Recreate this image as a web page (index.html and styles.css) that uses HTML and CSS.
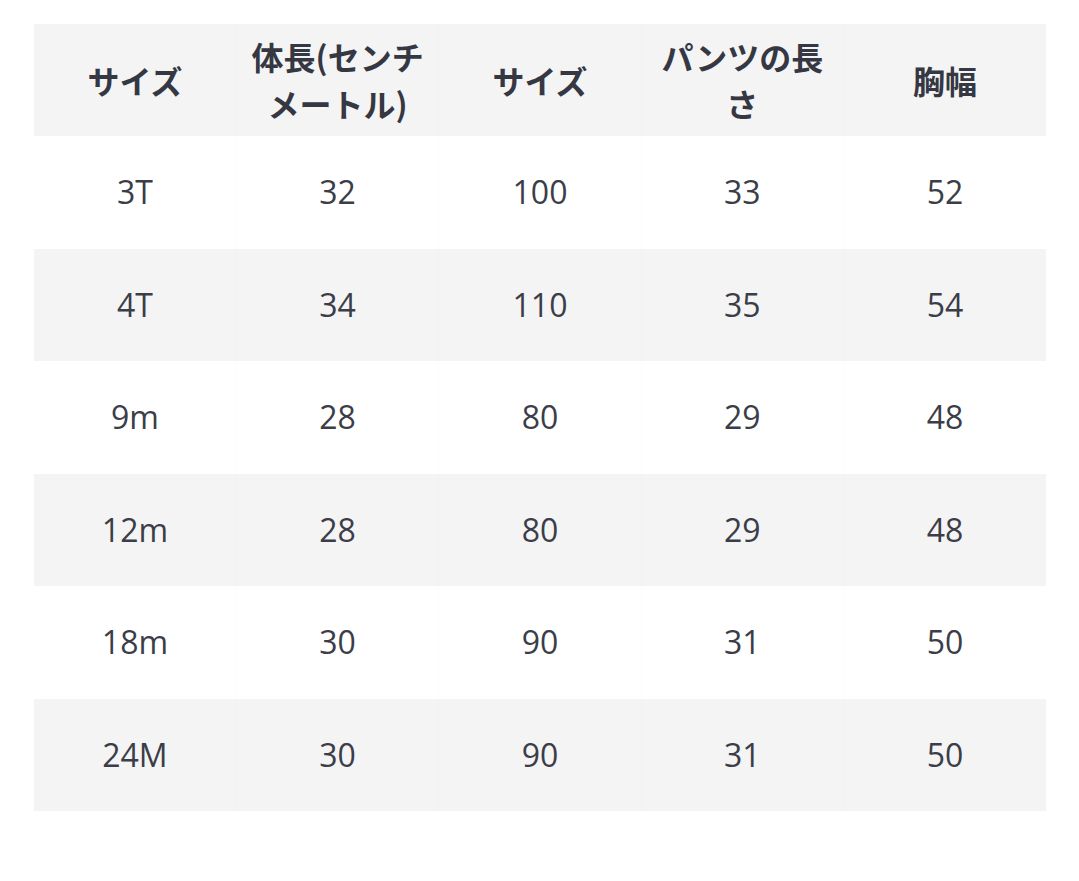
FILE: index.html
```html
<!DOCTYPE html>
<html lang="ja">
<head>
<meta charset="utf-8">
<title>サイズ表</title>
<link rel="stylesheet" href="styles.css">
</head>
<body>
<div class="wrap">
<table class="size-table">
  <thead>
    <tr>
      <th>サイズ</th>
      <th>体長(センチメートル)</th>
      <th>サイズ</th>
      <th>パンツの長さ</th>
      <th>胸幅</th>
    </tr>
  </thead>
  <tbody>
    <tr><td>3T</td><td>32</td><td>100</td><td>33</td><td>52</td></tr>
    <tr><td>4T</td><td>34</td><td>110</td><td>35</td><td>54</td></tr>
    <tr><td>9m</td><td>28</td><td>80</td><td>29</td><td>48</td></tr>
    <tr><td>12m</td><td>28</td><td>80</td><td>29</td><td>48</td></tr>
    <tr><td>18m</td><td>30</td><td>90</td><td>31</td><td>50</td></tr>
    <tr><td>24M</td><td>30</td><td>90</td><td>31</td><td>50</td></tr>
  </tbody>
</table>
</div>
</body>
</html>
```

FILE: styles.css
```css
html, body {
  margin: 0;
  padding: 0;
  background: #ffffff;
}

.wrap {
  padding: 24px 33px 0 34px;
}

.size-table {
  width: 1012px;
  border-collapse: collapse;
  table-layout: fixed;
  color: #383a45;
  font-family: "Open Sans", "Noto Sans CJK JP", sans-serif;
}

.size-table th,
.size-table td {
  text-align: center;
  vertical-align: middle;
  padding: 0 12px;
  border-right: 1px solid rgba(0, 0, 0, 0.012);
}

.size-table th:last-child,
.size-table td:last-child {
  border-right: none;
}

.size-table thead tr {
  height: 112px;
  background: #f4f4f5;
}

.size-table th {
  font-family: "Noto Sans CJK JP", sans-serif;
  font-weight: 700;
  font-size: 32px;
  line-height: 47px;
  color: #353843;
}

.size-table tbody tr {
  height: 112.5px;
}

.size-table tbody tr:nth-child(even) {
  background: #f4f4f5;
}

.size-table td {
  font-size: 32px;
  line-height: 44px;
  font-weight: 400;
  color: #3b3d48;
}
```
